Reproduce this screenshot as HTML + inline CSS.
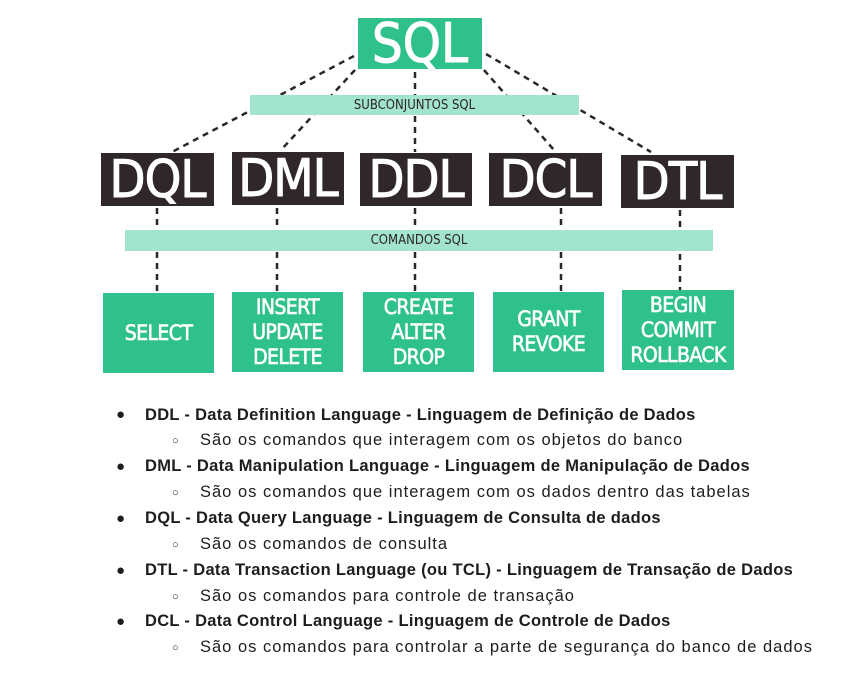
<!DOCTYPE html>
<html><head><meta charset="utf-8"><style>
body{margin:0;width:867px;height:687px;background:#fff;position:relative;overflow:hidden;font-family:"DejaVu Sans Condensed","Liberation Sans",sans-serif}
.b{position:absolute;display:flex;align-items:center;justify-content:center;text-align:center;color:#fff}
.g{background:#2fc18b}
.d{background:#30272b}
.bar{position:absolute;background:#a3e4cd;color:#2b2528;font-size:13px;display:flex;align-items:center;justify-content:center}
.big{font-size:52px;letter-spacing:-1px;-webkit-text-stroke:1px #fff}
.cmd{font-size:21px;line-height:25px;letter-spacing:-.6px;-webkit-text-stroke:.6px #fff}
.l{position:absolute;font-family:"Liberation Sans",sans-serif;font-size:16.5px;letter-spacing:1px;color:#1d1d1d;white-space:nowrap}
.l b{font-weight:bold;letter-spacing:.3px}
</style></head><body>
<svg width="867" height="687" style="position:absolute;left:0;top:0">
<g stroke="#2d2629" stroke-width="2.5" stroke-dasharray="6 5" fill="none">
<line x1="354" y1="56" x2="172" y2="152"/>
<line x1="355" y1="70" x2="281" y2="150"/>
<line x1="415" y1="72" x2="415" y2="152"/>
<line x1="484" y1="70" x2="554" y2="150"/>
<line x1="486" y1="54" x2="651" y2="152"/>
<line x1="157" y1="208" x2="157" y2="292"/>
<line x1="277" y1="208" x2="277" y2="292"/>
<line x1="415" y1="208" x2="415" y2="292"/>
<line x1="561" y1="208" x2="561" y2="292"/>
<line x1="680" y1="210" x2="680" y2="290"/>
</g></svg>
<div class="b g" style="left:358px;top:18px;width:124px;height:51px;font-size:54px;-webkit-text-stroke:1px #fff">SQL</div>
<div class="bar" style="left:250px;top:95px;width:329px;height:20px">SUBCONJUNTOS SQL</div>
<div class="b d big" style="left:101px;top:153px;width:113px;height:53px">DQL</div>
<div class="b d big" style="left:232px;top:152px;width:112px;height:53px">DML</div>
<div class="b d big" style="left:360px;top:153px;width:112px;height:53px">DDL</div>
<div class="b d big" style="left:489px;top:153px;width:113px;height:53px">DCL</div>
<div class="b d big" style="left:621px;top:155px;width:113px;height:53px">DTL</div>
<div class="bar" style="left:125px;top:230px;width:588px;height:21px">COMANDOS SQL</div>
<div class="b g cmd" style="left:103px;top:293px;width:111px;height:80px">SELECT</div>
<div class="b g cmd" style="left:232px;top:292px;width:111px;height:80px">INSERT<br>UPDATE<br>DELETE</div>
<div class="b g cmd" style="left:363px;top:292px;width:111px;height:80px">CREATE<br>ALTER<br>DROP</div>
<div class="b g cmd" style="left:493px;top:292px;width:111px;height:80px">GRANT<br>REVOKE</div>
<div class="b g cmd" style="left:622px;top:290px;width:112px;height:80px">BEGIN<br>COMMIT<br>ROLLBACK</div>

<div class="l" style="left:116px;top:406px;font-size:15px">●</div><div class="l" style="left:145px;top:406px"><b>DDL - Data Definition Language - Linguagem de Definição de Dados</b></div>
<div class="l" style="left:172px;top:435px;font-size:11px">○</div><div class="l" style="left:200px;top:431px">São os comandos que interagem com os objetos do banco</div>
<div class="l" style="left:116px;top:458px;font-size:15px">●</div><div class="l" style="left:145px;top:457px"><b>DML - Data Manipulation Language - Linguagem de Manipulação de Dados</b></div>
<div class="l" style="left:172px;top:487px;font-size:11px">○</div><div class="l" style="left:200px;top:483px">São os comandos que interagem com os dados dentro das tabelas</div>
<div class="l" style="left:116px;top:510px;font-size:15px">●</div><div class="l" style="left:145px;top:509px"><b>DQL - Data Query Language - Linguagem de Consulta de dados</b></div>
<div class="l" style="left:172px;top:539px;font-size:11px">○</div><div class="l" style="left:200px;top:535px">São os comandos de consulta</div>
<div class="l" style="left:116px;top:562px;font-size:15px">●</div><div class="l" style="left:145px;top:561px"><b>DTL - Data Transaction Language (ou TCL) - Linguagem de Transação de Dados</b></div>
<div class="l" style="left:172px;top:591px;font-size:11px">○</div><div class="l" style="left:200px;top:587px">São os comandos para controle de transação</div>
<div class="l" style="left:116px;top:613px;font-size:15px">●</div><div class="l" style="left:145px;top:612px"><b>DCL - Data Control Language - Linguagem de Controle de Dados</b></div>
<div class="l" style="left:172px;top:642px;font-size:11px">○</div><div class="l" style="left:200px;top:638px">São os comandos para controlar a parte de segurança do banco de dados</div>
</body></html>
